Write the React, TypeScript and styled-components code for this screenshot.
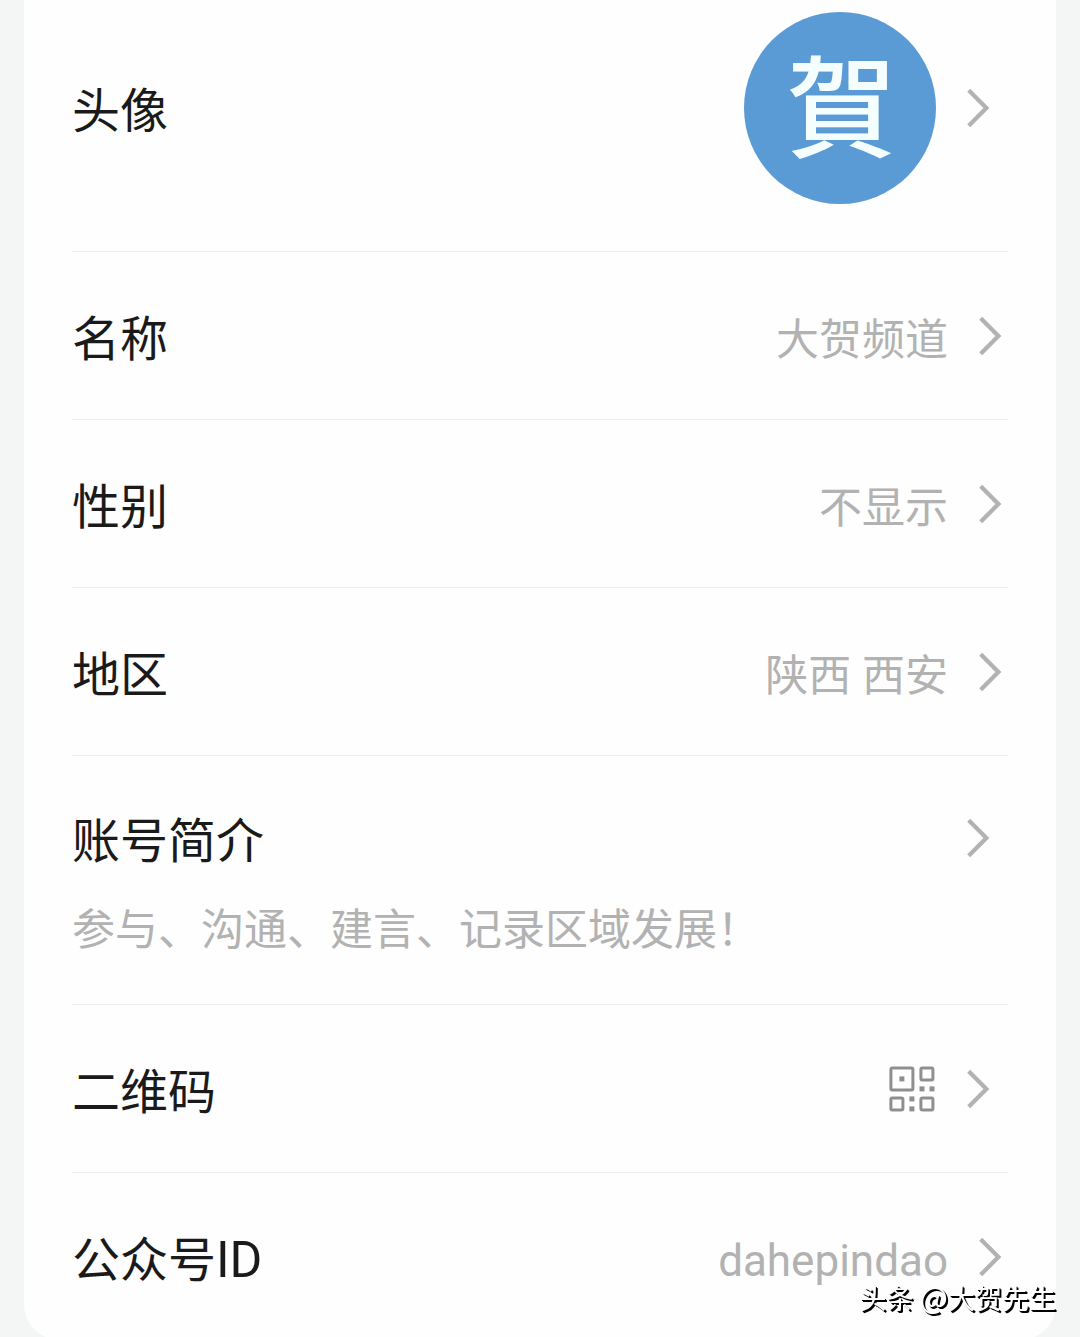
import React from "react";
import styled, { createGlobalStyle } from "styled-components";

const GlobalStyle = createGlobalStyle`
  *, *::before, *::after {
    box-sizing: border-box;
  }
  body {
    margin: 0;
    background: #f4f6f6;
    font-family: Roboto, "Noto Sans CJK SC", sans-serif;
  }
`;

const Page = styled.main`
  height: 100vh;
  padding: 0 24px;
  overflow-y: auto;
  scrollbar-width: none;
`;

const Card = styled.ul`
  margin: 0;
  padding: 0 48px;
  list-style: none;
  background: #fefefe;
  border-radius: 0 0 36px 36px;
`;

const Item = styled.li`
  border-bottom: 1px solid #ededed;

  &:last-child {
    border-bottom: 0;
  }
`;

const RowButton = styled.button`
  display: block;
  width: 100%;
  padding: 0;
  border: 0;
  background: none;
  color: inherit;
  font: inherit;
  text-align: left;
  cursor: pointer;
`;

const RowLine = styled.span<{ $inset: boolean; $kind: "plain" | "avatar" | "intro" }>`
  display: flex;
  align-items: center;
  gap: 30px;
  min-height: ${(p) => (p.$kind === "intro" ? "164px" : "167px")};
  padding: ${(p) => (p.$kind === "avatar" ? "12px" : "0")} ${(p) => (p.$inset ? "18px" : "6px")}
    ${(p) => (p.$kind === "avatar" ? "47px" : "0")} 0;
`;

const Label = styled.span`
  flex: 1;
  padding-top: 8px;
  color: #1a1a1a;
  font-size: 48px;
  line-height: 72px;
`;

const Value = styled.span`
  padding-top: 8px;
  color: #b2b2b2;
  font-size: 43px;
  line-height: 64px;
`;

const Intro = styled(Value)`
  display: block;
  margin-top: -30px;
  padding-bottom: 42px;
`;

const Latin = styled.span<{ $size: number }>`
  font-size: ${(p) => p.$size}px;
  line-height: 1;
`;

const Avatar = styled.span`
  display: flex;
  align-items: center;
  justify-content: center;
  width: 192px;
  height: 192px;
  padding: 0 0 14px 3px;
  border-radius: 50%;
  background: #5b9bd5;
  color: #f5feff;
  font-family: "Noto Sans CJK TC", sans-serif;
  font-size: 110px;
  font-weight: 500;
  line-height: 160px;
`;

const Watermark = styled.div`
  position: fixed;
  right: 24px;
  bottom: 19px;
  color: #fff;
  font-family: "Noto Sans CJK SC", sans-serif;
  font-size: 27px;
  line-height: 40px;
  text-shadow: 1px 1px 0 #000, 2px 2px 0 #000;
  pointer-events: none;
`;

const Chevron = () => (
  <svg width="24" height="40" viewBox="0 0 24 40" fill="none" aria-hidden="true">
    <path d="M2.7 2.2 20.4 20 2.7 37.8" stroke="#b2b2b2" strokeWidth="4.2" />
  </svg>
);

const QrIcon = () => (
  <svg width="48" height="46" viewBox="0 0 48 46" fill="none" aria-hidden="true">
    <g stroke="#8f8f8f" strokeWidth="3">
      <rect x="2.9" y="1.9" width="22" height="22" rx="1.5" />
      <rect x="32.9" y="1.9" width="12" height="12" rx="1.5" />
      <rect x="2.9" y="31.9" width="12" height="12" rx="1.5" />
      <rect x="32.9" y="31.9" width="12" height="12" rx="1.5" />
    </g>
    <g fill="#8f8f8f">
      <rect x="11.4" y="10.4" width="5" height="5" />
      <rect x="31.5" y="20.4" width="5" height="5" />
      <rect x="41.5" y="20.4" width="5" height="5" />
      <rect x="21.4" y="30.4" width="5" height="5" />
      <rect x="21.4" y="40.4" width="5" height="5" />
    </g>
  </svg>
);

type Row = {
  id: string;
  label: React.ReactNode;
  value?: React.ReactNode;
  media?: React.ReactNode;
  intro?: string;
  kind?: "plain" | "avatar" | "intro";
};

const rows: Row[] = [
  { id: "avatar", label: "头像", media: <Avatar>賀</Avatar>, kind: "avatar" },
  { id: "name", label: "名称", value: "大贺频道" },
  { id: "gender", label: "性别", value: "不显示" },
  { id: "region", label: "地区", value: "陕西 西安" },
  { id: "intro", label: "账号简介", intro: "参与、沟通、建言、记录区域发展！", kind: "intro" },
  { id: "qr", label: "二维码", media: <QrIcon /> },
  {
    id: "account",
    label: (
      <>
        公众号<Latin $size={50}>ID</Latin>
      </>
    ),
    value: <Latin $size={44}>dahepindao</Latin>,
  },
];

export default function App() {
  return (
    <>
      <GlobalStyle />
      <Page>
        <Card>
          {rows.map((row) => (
            <Item key={row.id}>
              <RowButton type="button">
                <RowLine $inset={!row.value} $kind={row.kind ?? "plain"}>
                  <Label>{row.label}</Label>
                  {row.value && <Value>{row.value}</Value>}
                  {row.media}
                  <Chevron />
                </RowLine>
                {row.intro && <Intro>{row.intro}</Intro>}
              </RowButton>
            </Item>
          ))}
        </Card>
      </Page>
      <Watermark>
        头条 <Latin $size={30}>@</Latin>大贺先生
      </Watermark>
    </>
  );
}
